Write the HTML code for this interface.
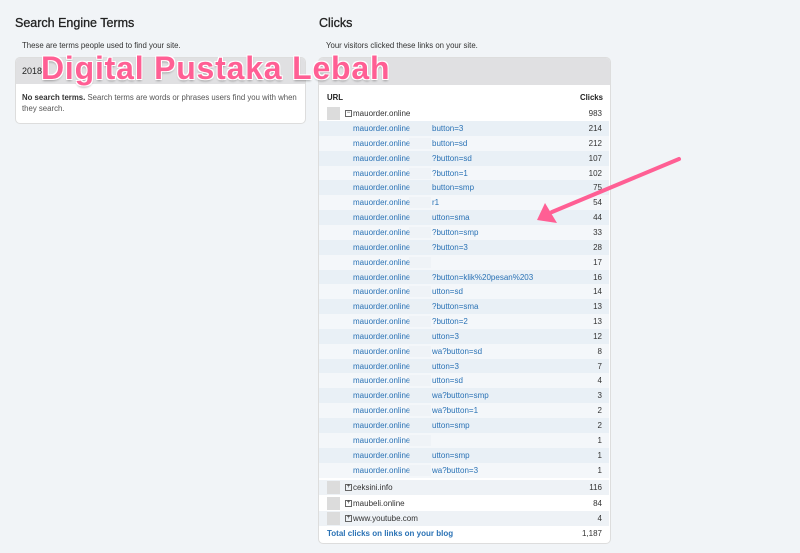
<!DOCTYPE html>
<html><head><meta charset="utf-8"><style>
body{margin:0;width:800px;height:553px;background:#f1f4f7;font-family:"Liberation Sans",sans-serif;position:relative;overflow:hidden;color:#222}
.a{position:absolute}
h2{position:absolute;margin:0;font-size:12.5px;font-weight:normal;color:#222;-webkit-text-stroke:0.3px #222}
.sm{font-size:7.8px;color:#333}
.row{position:absolute;left:319px;width:290px;height:15px;font-size:8px;line-height:15px}
.row .u{position:absolute;left:34px;color:#2a72b5}
.row .n{position:absolute;right:7px;color:#333}
.sq{position:absolute;left:8px;top:1px;width:13px;height:13px;background:#dcdcdc}
.bx{position:absolute;left:26px;top:4px;width:5px;height:5px;border:1px solid #666;font-size:6px;line-height:5px;text-align:center}
.blur{position:absolute;left:90px;top:2px;width:22px;height:11px;background:rgba(235,240,245,.6)}
</style></head><body>
<h2 style="left:15px;top:16px">Search Engine Terms</h2>
<div class="a sm" style="left:22px;top:41px">These are terms people used to find your site.</div>
<div class="a" style="left:15px;top:57px;width:289px;height:65px;background:#fff;border:1px solid #ddd;border-radius:5px;overflow:hidden">
<div style="height:26px;background:#e0e0e2;font-size:9px;line-height:26px;padding-left:6px">2018</div>
<div class="sm" style="padding:8px 6px;line-height:11px"><b>No search terms.</b> <span style="color:#555">Search terms are words or phrases users find you with when they search.</span></div>
</div>
<h2 style="left:319px;top:16px">Clicks</h2>
<div class="a sm" style="left:326px;top:41px">Your visitors clicked these links on your site.</div>
<div class="a" style="left:318px;top:57px;width:291px;height:485px;background:#fff;border:1px solid #ddd;border-radius:5px;overflow:hidden">
<div style="height:27px;background:#e0e0e2"></div>
</div>
<div class="a" style="left:327px;top:93px;font-size:7.8px;font-weight:bold">URL</div>
<div class="a" style="left:580px;top:93px;font-size:7.8px;font-weight:bold">Clicks</div>
<div class="row" style="top:106px"><div class="sq"></div><div class="bx">−</div><span class="u" style="color:#333">mauorder.online</span><span class="n">983</span></div>
<div id="rows"></div>
<script>
var d=[["button=3",214],["button=sd",212],["?button=sd",107],["?button=1",102],["button=smp",75],["r1",54],["utton=sma",44],["?button=smp",33],["?button=3",28],["",17],["?button=klik%20pesan%203",16],["utton=sd",14],["?button=sma",13],["?button=2",13],["utton=3",12],["wa?button=sd",8],["utton=3",7],["utton=sd",4],["wa?button=smp",3],["wa?button=1",2],["utton=smp",2],["",1],["utton=smp",1],["wa?button=3",1]];
var h="";for(var i=0;i<d.length;i++){var t=121+i*14.85;h+='<div class="row" style="top:'+t+'px;background:'+(i%2?'#f4f7fa':'#e9f0f6')+'"><span class="u">mauorder.online</span><div class="blur"></div><span class="u" style="left:113px">'+d[i][0]+'</span><span class="n">'+d[i][1]+'</span></div>';}
var e=[["ceksini.info",116,'#eef2f6'],["maubeli.online",84,'#fff'],["www.youtube.com",4,'#eef2f6']];
for(var j=0;j<3;j++){h+='<div class="row" style="top:'+(480+j*15.5)+'px;background:'+e[j][2]+'"><div class="sq"></div><div class="bx">+</div><span class="u" style="color:#333">'+e[j][0]+'</span><span class="n">'+e[j][1]+'</span></div>';}
h+='<div class="row" style="top:526px"><span class="u" style="left:8px;font-weight:bold">Total clicks on links on your blog</span><span class="n">1,187</span></div>';
document.getElementById("rows").innerHTML=h;
</script>
<div class="a" style="left:41px;top:50px;font-size:32px;font-weight:bold;color:#ff5f94;letter-spacing:0.8px;text-shadow:1px 1px 0 #fff,-1px -1px 0 #fff,1px -1px 0 #fff,-1px 1px 0 #fff,0 2px 2px rgba(0,0,0,.3)">Digital Pustaka Lebah</div>
<svg class="a" style="left:0;top:0" width="800" height="553"><line x1="679" y1="159" x2="552" y2="212" stroke="#ff5f94" stroke-width="4" stroke-linecap="round"/><polygon points="537,220 545,203 557,223" fill="#ff5f94"/></svg>
</body></html>
